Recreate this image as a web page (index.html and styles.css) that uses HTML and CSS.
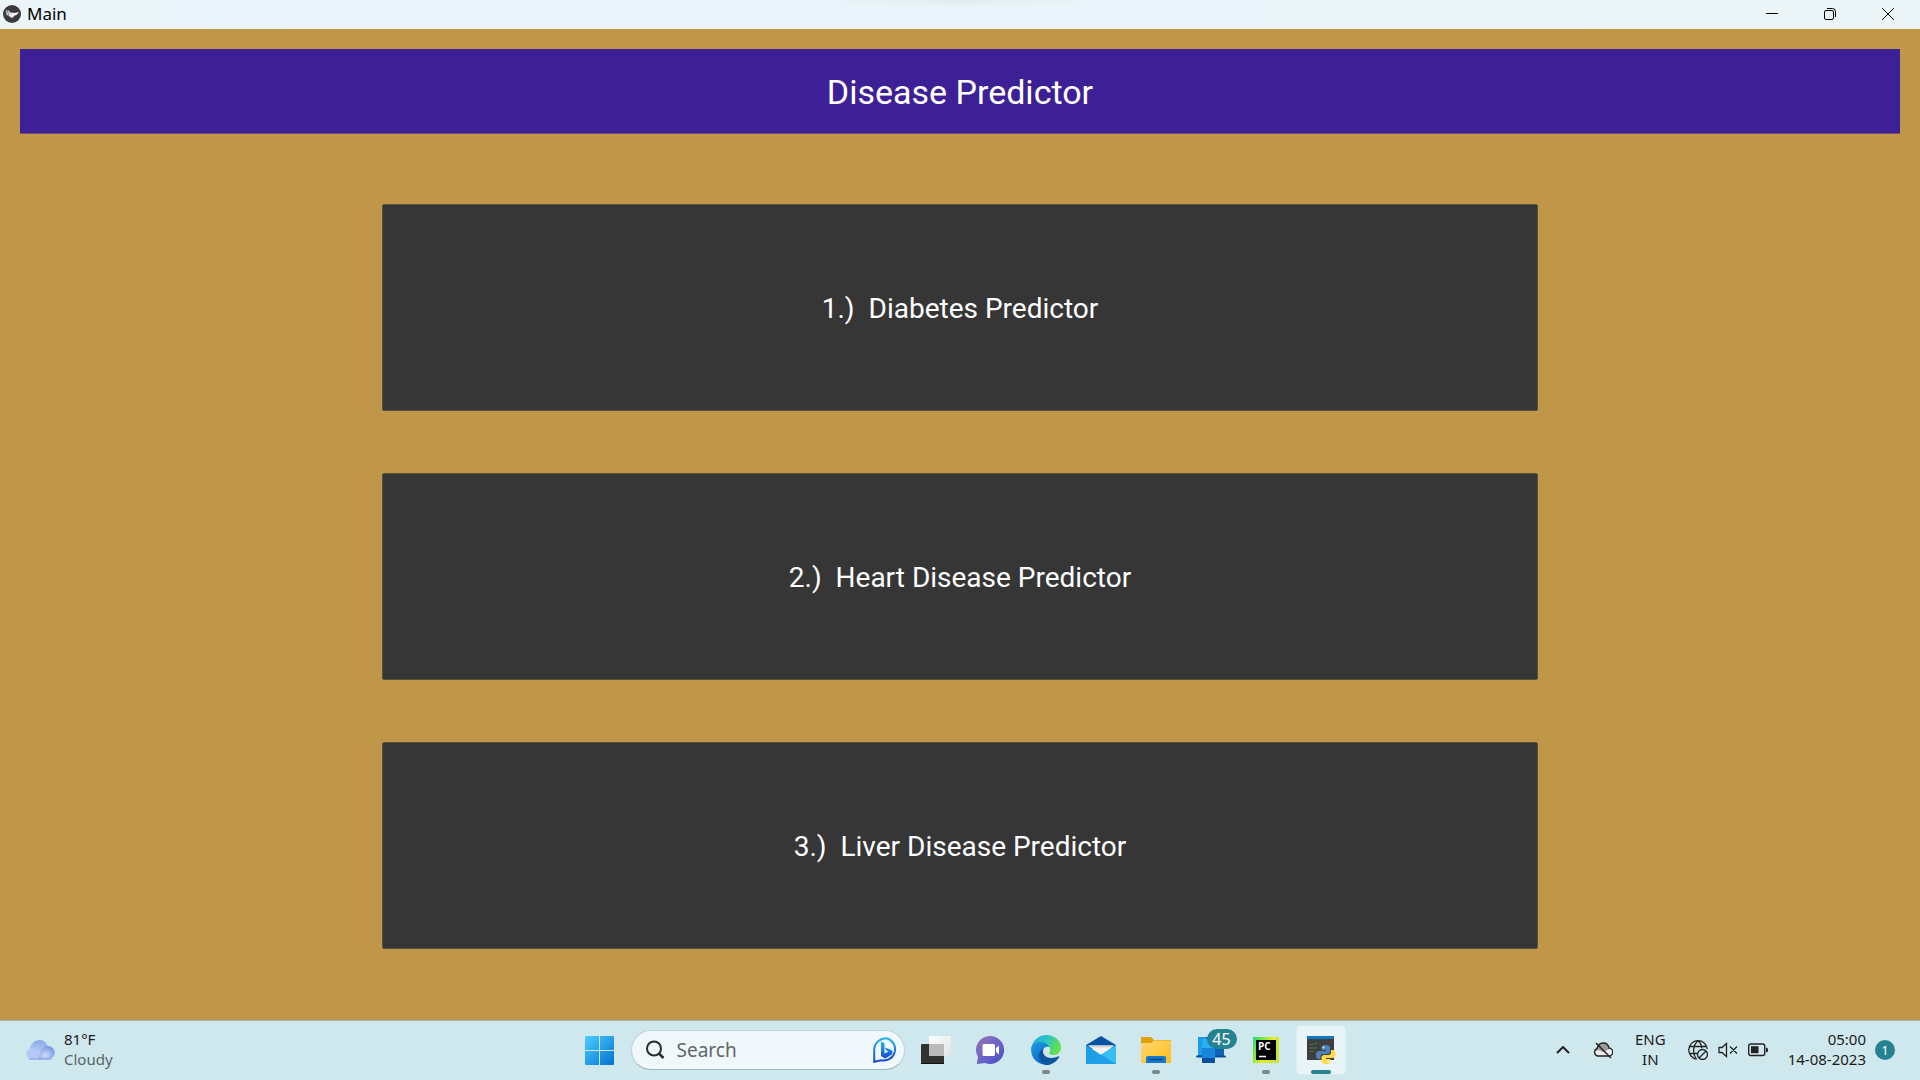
FILE: index.html
```html
<!DOCTYPE html>
<html lang="en">
<head>
<meta charset="utf-8">
<title>Main</title>
<link rel="stylesheet" href="styles.css">
</head>
<body>
<div class="desktop">
  <header class="titlebar">
    <svg class="app-icon" width="18" height="18" viewBox="0 0 18 18" aria-hidden="true">
      <circle cx="9" cy="9" r="9" fill="#3b3b3d"/>
      <path d="M2.800 6l1.200-1.500L5.500 11 3.500 10z" fill="#c8c8c8"/>
      <path d="M5 5l5.200 5-1.700 3-2.700-2z" fill="#e4e4e4"/>
      <path d="M8.500 7.500l3 .5 4.500-1-2.500 3-2 .5-2.500 2.800z" fill="#fff"/>
    </svg>
    <span class="window-name">Main</span>
    <div class="window-controls">
      <button class="window-button" aria-label="Minimize"><svg width="14" height="14" viewBox="0 0 14 14"><path d="M1 6.500h12" class="line"/></svg></button>
      <button class="window-button" aria-label="Restore"><svg width="14" height="14" viewBox="0 0 14 14"><rect x="1.500" y="3.500" width="9" height="9" rx="1.500" class="line"/><path d="M4 1.500h5.500a3 3 0 0 1 3 3V10" class="line"/></svg></button>
      <button class="window-button" aria-label="Close"><svg width="14" height="14" viewBox="0 0 14 14"><path d="M1.200 1.200l11.600 11.600M12.800 1.200L1.200 12.800" class="line"/></svg></button>
    </div>
  </header>

  <main class="app">
    <h1 class="banner">Disease Predictor</h1>
    <div class="choices">
      <button class="choice">1.)&nbsp; Diabetes Predictor</button>
      <button class="choice">2.)&nbsp; Heart Disease Predictor</button>
      <button class="choice">3.)&nbsp; Liver Disease Predictor</button>
    </div>
  </main>

  <footer class="taskbar">
    <button class="weather">
      <svg width="30" height="20" viewBox="0 0 30 20" aria-hidden="true">
        <defs>
          <linearGradient id="cloudA" x1="0" y1="0" x2="0" y2="1"><stop offset="0" stop-color="#86a8ea"/><stop offset="1" stop-color="#cfdefa"/></linearGradient>
          <radialGradient id="cloudB" cx=".4" cy=".7" r=".7"><stop offset="0" stop-color="#cfdcf8"/><stop offset="1" stop-color="#7798e4"/></radialGradient>
        </defs>
        <path d="M6 19a6 6 0 0 1-1-10.500C6 3.500 10 0 14.500 0S22 3 23 7l2 12z" fill="url(#cloudA)"/>
        <path d="M6 19.500A5.900 5.900 0 0 1 6 8c6 0 10 5 11 11.500z" fill="#b4c9f6"/>
        <path d="M14 19.500c0-9 4-13.500 9-13.500a6.800 6.800 0 0 1 1 13.500z" fill="url(#cloudB)"/>
        <path d="M4 19h22" stroke="#7e9fe6"/>
      </svg>
      <span class="stack"><span>81°F</span><span class="muted">Cloudy</span></span>
    </button>

    <nav class="pinned" aria-label="Apps">
      <button class="task" aria-label="Start">
        <svg width="30" height="30" viewBox="0 0 30 30">
          <defs><linearGradient id="win" gradientUnits="userSpaceOnUse" x1="0" y1="0" x2="30" y2="30"><stop offset="0" stop-color="#4fd0ff"/><stop offset="1" stop-color="#006fd2"/></linearGradient></defs>
          <path fill="url(#win)" d="M1 1h13v14H0V2a1 1 0 0 1 1-1zM15 1h13a1 1 0 0 1 1 1v13H15zM0 16h14v14H1a1 1 0 0 1-1-1zM15 16h14v13a1 1 0 0 1-1 1H15z"/>
        </svg>
      </button>
      <div class="search">
        <svg width="20" height="20" viewBox="0 0 20 20" aria-hidden="true"><circle cx="9" cy="8.500" r="7" fill="none" stroke="#2b2b2b" stroke-width="2"/><path d="M14 13.500l4.500 4.500" stroke="#2b2b2b" stroke-width="2.500"/></svg>
        <input class="search-input" type="text" placeholder="Search" aria-label="Search">
        <svg width="26" height="26" viewBox="0 0 26 26" aria-hidden="true">
          <defs><linearGradient id="bing" x1="0" y1="0" x2="0" y2="1"><stop offset="0" stop-color="#25b5f2"/><stop offset="1" stop-color="#1746cf"/></linearGradient></defs>
          <path d="M13.500 1.200A11.300 11.300 0 1 1 8 23.200L1.200 24.800V12.500A12 12 0 0 1 13.500 1.200z" fill="none" stroke="url(#bing)" stroke-width="2"/>
          <path d="M8 4.500l3.500 1.500v10.500l4-2-2.500-1.200-1-2.800 6 2.200a3 3 0 0 1 .5 5l-6.500 3.800L8 19z" fill="url(#bing)"/>
        </svg>
      </div>
      <button class="task" aria-label="Task view">
        <svg width="30" height="30" viewBox="0 0 30 30">
          <defs><linearGradient id="tv" x1="0" y1="0" x2="1" y2="1"><stop offset="0" stop-color="#fff"/><stop offset="1" stop-color="#dfe3e3"/></linearGradient></defs>
          <rect x="0" y="9" width="23" height="20" rx="1" fill="#32322f"/><path d="M0 28.500h23" stroke="#111"/>
          <rect x="8" y="1" width="22" height="20" rx="1" fill="url(#tv)"/>
          <path d="M8 9h15v12H8z" fill="#bababa"/>
        </svg>
      </button>
      <button class="task" aria-label="Chat">
        <svg width="30" height="30" viewBox="0 0 30 30">
          <defs><linearGradient id="chat" x1="0" y1="0" x2="1" y2="1"><stop offset="0" stop-color="#9d70a8"/><stop offset=".35" stop-color="#7a6bc4"/><stop offset=".8" stop-color="#5558c8"/></linearGradient></defs>
          <path d="M15 1a14 14 0 1 1-6 27L.8 29l1.200-7A14 14 0 0 1 15 1z" fill="url(#chat)"/>
          <rect x="6.500" y="9" width="12.500" height="12" rx="1.500" fill="#fff"/><path d="M20 13l3-2.500v9L20 17z" fill="#fff"/>
        </svg>
      </button>
      <button class="task running" aria-label="Edge">
        <svg width="30" height="30" viewBox="0 0 30 30">
          <defs>
            <linearGradient id="e1" x1="0" y1="0" x2="1" y2=".4"><stop offset="0" stop-color="#2aa6e0"/><stop offset=".5" stop-color="#2bc3c8"/><stop offset="1" stop-color="#63e04d"/></linearGradient>
            <linearGradient id="e2" x1="0" y1="0" x2=".6" y2="1"><stop offset="0" stop-color="#1b9de2"/><stop offset="1" stop-color="#0b66c8"/></linearGradient>
          </defs>
          <path d="M.5 12C2 5 8 0 15 0c9 0 15 6 15 12.500 0 5-4 7.500-7.500 7.500-3 0-5-1-4-2.500 2-3 0-7-5-8C8 8.500 3 10 .5 12z" fill="url(#e1)"/>
          <path d="M.3 12C3 7.500 8 6 12.500 7.500c4 1.300 5.500 3.500 5.500 4.500-4-1-7 2-6.500 6 .5 5 4 9 8 11C9 32-1.500 24 .3 12z" fill="url(#e2)"/>
          <path d="M12.500 13.500c-2.500 7 4.500 12 14.500 8 1-.4 1.500 0 1 .9C25 27.500 19.500 30 15 30c-5-2-8-7-7-11 .7-3 2.500-4.800 4.500-5.500z" fill="#0e559f"/>
        </svg>
      </button>
      <button class="task" aria-label="Mail">
        <svg width="30" height="30" viewBox="0 0 30 30">
          <path d="M0 10L15 1l15 9v4H0z" fill="#0a53a0"/><path d="M2 10.500h26L16 21z" fill="#f5f4f2"/><path d="M3 10.500h24l-2 2H6z" fill="#d6d6d4"/>
          <path d="M0 10l15 10-14 9H0z" fill="#1b9de8"/><path d="M30 10L0 29h30z" fill="#38bdf5"/><path d="M15 19.500L30 29H0z" fill="#209fe8"/>
        </svg>
      </button>
      <button class="task running" aria-label="File Explorer">
        <svg width="30" height="30" viewBox="0 0 30 30">
          <defs><linearGradient id="fold" x1="0" y1="0" x2="1" y2="1"><stop offset="0" stop-color="#ffd873"/><stop offset="1" stop-color="#fdbb19"/></linearGradient></defs>
          <path d="M0 3a1 1 0 0 1 1-1h9l3 3h16a1 1 0 0 1 1 1v5H0z" fill="#dfa00d"/>
          <path d="M0 8h10l3-2.500h17V27a1 1 0 0 1-1 1H1a1 1 0 0 1-1-1z" fill="url(#fold)"/>
          <path d="M5 28v-5a2 2 0 0 1 2-2h16a2 2 0 0 1 2 2v5z" fill="#1478cf"/><path d="M9 24.500h12" stroke="#08447f" stroke-width="1.500" stroke-linecap="round"/>
        </svg>
      </button>
      <button class="task" aria-label="Phone Link, 45 notifications">
        <svg width="30" height="30" viewBox="0 0 30 30">
          <rect x="2" y="2" width="26" height="20" fill="#0f62b8"/><path d="M2 2h8v18H2z" fill="#1a9be8"/><rect x="0" y="20.500" width="30" height="2" rx="1" fill="#0b4f98"/>
          <rect x="6" y="4" width="13" height="24" rx="1" fill="#27b0f3"/><path d="M6 13h13v14a1 1 0 0 1-1 1H7a1 1 0 0 1-1-1z" fill="#1686d8"/><path d="M6 23h13v4a1 1 0 0 1-1 1H7a1 1 0 0 1-1-1z" fill="#0a4fa0"/>
        </svg>
        <span class="badge">45</span>
      </button>
      <button class="task running" aria-label="PyCharm">
        <svg width="30" height="30" viewBox="0 0 30 30">
          <defs><linearGradient id="pc" x1="0" y1="0" x2="1" y2=".5"><stop offset="0" stop-color="#21d789"/><stop offset=".3" stop-color="#6fe83a"/><stop offset=".65" stop-color="#e3ee28"/><stop offset="1" stop-color="#c9e233"/></linearGradient></defs>
          <rect x="2" y="2" width="26" height="26" fill="url(#pc)"/><rect x="5" y="5" width="20" height="20" fill="#000"/>
          <text x="7" y="15" class="pc-text">PC</text><path d="M8 21.500h7" stroke="#fff" stroke-width="1.500"/>
        </svg>
      </button>
      <button class="task active" aria-label="Python">
        <svg width="30" height="30" viewBox="0 0 30 30">
          <rect x="1" y="1" width="27" height="24" fill="#3f3f40"/><rect x="1" y="1" width="27" height="3" fill="#1575bd"/>
          <path d="M4 9.500h3M8 8.500h3M4 13h7M4 16.500h4" stroke="#3f7d42"/>
          <path d="M19.500 10c-4 0-4 1.500-4 3v2h4.500v1h-7c-2 0-3 1.500-3 4s1 4 3 4h1.500v-2.500c0-1.500 1-2.500 2.500-2.500h4.500c1.500 0 2.500-1 2.500-2.500V13c0-2-1.500-3-4.500-3z" fill="#4a84b8"/>
          <path d="M20.500 29c4 0 4-1.500 4-3v-2H20v-1h6.500c2 0 3-1.500 3-4s-1-4-3-4H25v2.500c0 1.500-1 2.500-2.500 2.500H18c-1.500 0-2.500 1-2.500 2.500V26c0 2 1.500 3 5 3z" fill="#ffd94a"/>
          <circle cx="17.500" cy="12.500" r="1" fill="#dfe9f2"/><circle cx="22.500" cy="26.500" r="1" fill="#fff"/>
        </svg>
      </button>
    </nav>

    <div class="tray">
      <button class="tray-button" aria-label="Show hidden icons"><svg width="14" height="8" viewBox="0 0 14 8"><path d="M1 7l6-6 6 6" fill="none" stroke="#222" stroke-width="2"/></svg></button>
      <button class="tray-button cloud" aria-label="OneDrive">
        <svg width="20" height="18" viewBox="0 0 20 18"><path d="M4.500 15a4 4 0 0 1-.5-7.500C5 4 7.500 2 10 2c3 0 5.500 2 6 5a4 4 0 0 1-.5 8z" fill="#eee"/><path d="M1 11c0-2 1.500-3.300 3-3.500C5 4 7.500 2 10 2c3 0 5.500 2 6 5l1 .3-7 4.200C8 9 4 8 1 11z" fill="#9c9c9c"/><path d="M4.500 15a4 4 0 0 1-.5-7.500C5 4 7.500 2 10 2c3 0 5.500 2 6 5a4 4 0 0 1-.5 8z" fill="none" stroke="#222" stroke-width="1.400"/><path d="M3 2l15 15" stroke="#222" stroke-width="1.500"/></svg>
      </button>
      <button class="tray-button stack language"><span>ENG</span><span>IN</span></button>
      <button class="tray-button status" aria-label="Network, sound and battery">
        <svg width="20" height="20" viewBox="0 0 20 20"><g fill="none" stroke="#222" stroke-width="1.300"><path d="M9 19.200A9.300 9.300 0 1 1 19.300 9M1.500 6.500h17M1.500 13.500H9M8 18.500C4.500 13 4.500 6 10 .8c2.500 2 3.700 5 3.700 7.500"/><circle cx="14.500" cy="14.500" r="5"/><path d="M11 18l7-7"/></g></svg>
        <svg width="20" height="16" viewBox="0 0 20 16"><path d="M1 5.500h3L8.500 1.500v13L4 10.500H1zM12 4.500l7 7M19 4.500l-7 7" fill="none" stroke="#222" stroke-width="1.300"/></svg>
        <svg width="20" height="14" viewBox="0 0 20 14"><rect x=".7" y="1" width="16" height="11.500" rx="2" fill="none" stroke="#222" stroke-width="1.400"/><rect x="3" y="3.200" width="7.500" height="7" fill="#222"/><path d="M18 4.500a2 2 0 0 1 2 2v1a2 2 0 0 1-2 2z" fill="#222"/></svg>
      </button>
      <button class="tray-button clock">
        <span class="stack end"><span>05:00</span><span>14-08-2023</span></span>
        <span class="count">1</span>
      </button>
    </div>
  </footer>
</div>
</body>
</html>
```

FILE: styles.css
```css
* {
  box-sizing: border-box;
}

body {
  margin: 0;
  font-family: "Noto Sans", "Open Sans", sans-serif;
  font-size: 15px;
  color: #1b1b1b;
}

button {
  margin: 0;
  padding: 0;
  border: 0;
  background: none;
  font: inherit;
  color: inherit;
}

svg {
  display: block;
  flex: none;
}

.desktop {
  display: flex;
  flex-direction: column;
  min-height: 100vh;
}

/* Window title bar */
.titlebar {
  display: flex;
  align-items: center;
  height: 29px;
  padding: 0 3px 1px;
  background:
    radial-gradient(150px 8px at 50% 0, #e2ecec, transparent),
    linear-gradient(90deg, #ebf5f8, #ebf4fc 15%, #ebf4fb 60%, #ebf5f8 85%);
}

.window-name {
  margin-left: 6px;
  font-size: 17px;
  line-height: 28px;
  color: #000;
}

.window-controls {
  display: flex;
  margin-left: auto;
}

.window-button {
  display: grid;
  place-items: center;
  width: 58px;
  height: 28px;
}

.line {
  fill: none;
  stroke: #000;
}

/* Application */
.app {
  flex: 1;
  display: flex;
  flex-direction: column;
  align-items: center;
  gap: 70px;
  padding: 20px 20px 71px;
  background: #c09748;
  font-family: Roboto, sans-serif;
  color: #fff;
}

.banner {
  width: 100%;
  margin: 0;
  padding: 23px 20px 20px;
  background: #3d2096;
  border-bottom: 1px solid #734f7a;
  font-size: 34px;
  line-height: 41px;
  font-weight: 400;
  text-align: center;
}

.choices {
  flex: 1;
  display: flex;
  flex-direction: column;
  gap: 62px;
  width: 61.5%;
}

.choice {
  flex: 1;
  min-height: 80px;
  padding-top: 3px;
  background: #363636;
  border: 1px solid #59503d;
  border-radius: 2px;
  font-size: 28px;
  line-height: 34px;
}

/* Taskbar */
.taskbar {
  display: grid;
  grid-template-columns: 1fr auto 1fr;
  align-items: center;
  height: 60px;
  padding: 0 25px 1px;
  background: #cee8ee;
  border-top: 1px solid #a5b3b8;
}

.weather {
  display: flex;
  align-items: center;
  gap: 9px;
  justify-self: start;
  text-align: left;
}

.stack {
  display: flex;
  flex-direction: column;
  padding-bottom: 2px;
  line-height: 20px;
}

.end {
  align-items: flex-end;
}

.muted {
  color: #5a6568;
}

.pinned {
  display: flex;
  align-items: center;
  gap: 7px;
}

.task {
  position: relative;
  display: grid;
  place-items: center;
  width: 48px;
  height: 48px;
  border-radius: 4px;
}

.running::after,
.active::after {
  content: "";
  position: absolute;
  bottom: 0;
  left: 20px;
  width: 8px;
  height: 4px;
  border-radius: 2px;
  background: #7b8688;
}

.active {
  background: #e8f4f8;
  box-shadow: 0 0 1px 1px #dcebef;
}

.active::after {
  left: 14px;
  width: 20px;
  background: #258292;
}

.badge {
  position: absolute;
  top: 3px;
  left: 20px;
  width: 30px;
  height: 20px;
  border-radius: 10px;
  background: #258292;
  color: #fff;
  font-size: 16px;
  line-height: 20px;
  text-align: center;
}

.pc-text {
  font: 700 10px "Open Sans", sans-serif;
  fill: #fff;
}

.search {
  display: flex;
  align-items: center;
  width: 274px;
  height: 40px;
  padding: 0 5px 0 13px;
  border: 1px solid #bcd6dd;
  border-bottom-color: #a3b7bc;
  border-radius: 20px;
  background: #f0f8fb;
}

.search-input {
  flex: 1;
  min-width: 0;
  margin-left: 12px;
  padding: 0;
  border: 0;
  background: none;
  font: inherit;
  font-size: 19px;
  line-height: 26px;
}

.search-input::placeholder {
  color: #5f6567;
}

.tray {
  display: flex;
  align-items: center;
  justify-self: end;
}

.tray-button {
  display: flex;
  align-items: center;
}

.cloud {
  margin-left: 23px;
}

.language {
  flex-direction: column;
  margin: 0 22px;
}

.status {
  gap: 10px;
}

.clock {
  gap: 9px;
  margin-left: 20px;
}

.count {
  width: 20px;
  height: 20px;
  border-radius: 10px;
  background: #258292;
  color: #fff;
  font-size: 13px;
  line-height: 20px;
  text-align: center;
}
```
